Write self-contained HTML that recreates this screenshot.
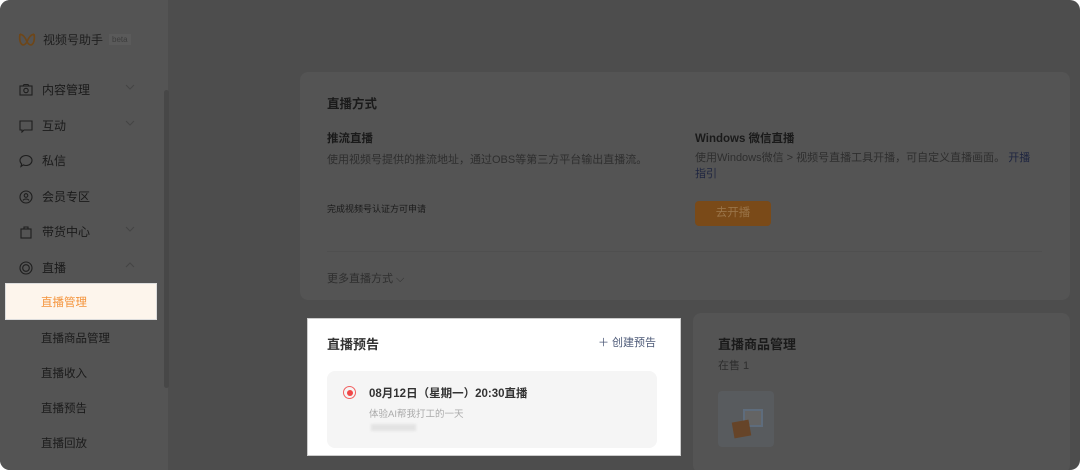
<!DOCTYPE html>
<html><head><meta charset="utf-8"><style>
*{margin:0;padding:0;box-sizing:border-box}
body{width:1080px;height:470px;background:#fff;font-family:"Liberation Sans","Noto Sans CJK SC",sans-serif;overflow:hidden}
#f{position:absolute;left:0;top:0;width:1080px;height:470px;border-radius:10px;background:#4d4d4d;overflow:hidden}
#side{position:absolute;left:0;top:0;width:168px;height:470px;background:#545454}
.logo{position:absolute;left:18px;top:31px;font-size:12px;color:#1e1e1e;display:flex;align-items:center}
.beta{font-size:8px;color:#3c3c3c;background:#5a5a5a;padding:1px 3px;margin-left:6px}
.it{position:absolute;left:19px;font-size:12px;color:#1a1a1a;display:flex;align-items:center;width:125px}
.it svg{margin-right:9px}
.it .ch{position:absolute;right:0;top:3px}
.sub{position:absolute;left:41px;font-size:11.5px;color:#1a1a1a}
.sel{position:absolute;left:5px;top:283px;width:152px;height:37px;background:#fdf5ec;border:1px solid #ddd}
.sel span{position:absolute;left:35px;top:10px;color:#f4933a;font-size:11.5px}
.sb{position:absolute;left:164px;top:90px;width:5px;height:298px;background:#474747;border-radius:3px}
.card{position:absolute;background:#545454;border-radius:8px}
.t{position:absolute;font-size:12.5px;font-weight:bold;color:#1a1a1a}
.s{position:absolute;font-size:11px;color:#2e2e2e}
</style></head><body><div id="f">
<div id="side">
<div class="logo"><svg width="18" height="16" viewBox="0 0 18 16"><path d="M2 2c4 1 6 5 7 8M16 2c-4 1-6 5-7 8M2 2c-1 5 0 10 3 11 2 0 3-2 4-3M16 2c1 5 0 10-3 11-2 0-3-2-4-3" fill="none" stroke="#6e4618" stroke-width="1.6"/></svg><span style="margin-left:7px">视频号助手</span><span class="beta">beta</span></div>
<div class="it" style="top:81px"><svg width="14" height="14" viewBox="0 0 14 14" fill="none" stroke="#1e1e1e" stroke-width="1.1"><rect x="1" y="3" width="12" height="9"/><circle cx="7" cy="7.5" r="2.2"/><path d="M4 3l1-1.5h4L10 3"/></svg>内容管理<svg class="ch" width="10" height="6" viewBox="0 0 10 6"><path d="M1 1l4 4 4-4" fill="none" stroke="#444"/></svg></div>
<div class="it" style="top:117px"><svg width="14" height="14" viewBox="0 0 14 14" fill="none" stroke="#1e1e1e" stroke-width="1.1"><path d="M1 2h12v9H5l-2 2v-2H1z"/></svg>互动<svg class="ch" width="10" height="6" viewBox="0 0 10 6"><path d="M1 1l4 4 4-4" fill="none" stroke="#444"/></svg></div>
<div class="it" style="top:152px"><svg width="14" height="14" viewBox="0 0 14 14" fill="none" stroke="#1e1e1e" stroke-width="1.1"><path d="M7 1.5c3.3 0 6 2.2 6 5s-2.7 5-6 5c-1 0-2-.2-2.8-.6L2 12.5l.6-2.6C1.6 9 1 7.8 1 6.5c0-2.8 2.7-5 6-5z"/></svg>私信</div>
<div class="it" style="top:188px"><svg width="14" height="14" viewBox="0 0 14 14" fill="none" stroke="#1e1e1e" stroke-width="1.1"><circle cx="7" cy="7" r="6"/><circle cx="7" cy="5.5" r="1.8"/><path d="M4 10.5c1-2 5-2 6 0"/></svg>会员专区</div>
<div class="it" style="top:223px"><svg width="14" height="14" viewBox="0 0 14 14" fill="none" stroke="#1e1e1e" stroke-width="1.1"><rect x="2" y="4" width="10" height="9"/><path d="M5 4V2h4v2"/></svg>带货中心<svg class="ch" width="10" height="6" viewBox="0 0 10 6"><path d="M1 1l4 4 4-4" fill="none" stroke="#444"/></svg></div>
<div class="it" style="top:259px"><svg width="14" height="14" viewBox="0 0 14 14" fill="none" stroke="#1e1e1e" stroke-width="1.1"><circle cx="7" cy="7" r="6"/><circle cx="7" cy="7" r="3.3"/></svg>直播<svg class="ch" width="10" height="6" viewBox="0 0 10 6"><path d="M1 5l4-4 4 4" fill="none" stroke="#444"/></svg></div>
<div class="sel"><span>直播管理</span></div>
<div class="sub" style="top:330px">直播商品管理</div>
<div class="sub" style="top:365px">直播收入</div>
<div class="sub" style="top:400px">直播预告</div>
<div class="sub" style="top:435px">直播回放</div>
<div class="sb"></div>
</div>
<div class="card" style="left:300px;top:72px;width:770px;height:228px"></div>
<div class="t" style="left:327px;top:93px">直播方式</div>
<div class="t" style="left:327px;top:130px;font-size:11.5px">推流直播</div>
<div class="s" style="left:327px;top:151px">使用视频号提供的推流地址，通过OBS等第三方平台输出直播流。</div>
<div class="s" style="left:327px;top:202px;font-size:9px;color:#1a1a1a">完成视频号认证方可申请</div>
<div class="t" style="left:695px;top:130px;font-size:11.5px">Windows 微信直播</div>
<div class="s" style="left:695px;top:150px;width:340px;line-height:16px">使用Windows微信 &gt; 视频号直播工具开播，可自定义直播画面。 <span style="color:#1e2540">开播指引</span></div>
<div style="position:absolute;left:695px;top:201px;width:76px;height:25px;background:#7a4a18;border-radius:4px;color:#9a7448;font-size:11.5px;text-align:center;line-height:25px">去开播</div>
<div style="position:absolute;left:327px;top:251px;width:715px;height:1px;background:#4f4f4f"></div>
<div class="s" style="left:327px;top:270px">更多直播方式 ⌵</div>
<div style="position:absolute;left:307px;top:318px;width:374px;height:138px;background:#fff;border:1px solid #ccc"></div>
<div class="t" style="left:327px;top:334px;font-size:13px;color:#333">直播预告</div>
<div style="position:absolute;left:598px;top:334px;font-size:11px;color:#4d5a78">＋ 创建预告</div>
<div style="position:absolute;left:327px;top:371px;width:330px;height:77px;background:#f5f5f5;border-radius:8px"></div>
<div style="position:absolute;left:343px;top:386px;width:13px;height:13px;border-radius:50%;border:1.5px solid #f26060"></div>
<div style="position:absolute;left:346.5px;top:389.5px;width:6px;height:6px;border-radius:50%;background:#f04848"></div>
<div class="t" style="left:369px;top:385px;font-size:11.5px;color:#333">08月12日（星期一）20:30直播</div>
<div style="position:absolute;left:369px;top:406px;font-size:9.5px;color:#aaa">体验AI帮我打工的一天</div>
<div style="position:absolute;left:371px;top:424px;width:45px;height:7px;background:#e3e3e3;filter:blur(1px)"></div>
<div class="card" style="left:693px;top:313px;width:377px;height:160px"></div>
<div class="t" style="left:718px;top:334px;font-size:13px">直播商品管理</div>
<div class="s" style="left:718px;top:357px">在售 1</div>
<div style="position:absolute;left:718px;top:391px;width:56px;height:56px;background:#585b5e;border-radius:4px"><div style="position:absolute;left:25px;top:18px;width:20px;height:18px;border:2px solid #5e6c7c;background:#646464"></div><div style="position:absolute;left:15px;top:30px;width:17px;height:16px;background:#664428;transform:rotate(-10deg)"></div></div>
</div></body></html>
